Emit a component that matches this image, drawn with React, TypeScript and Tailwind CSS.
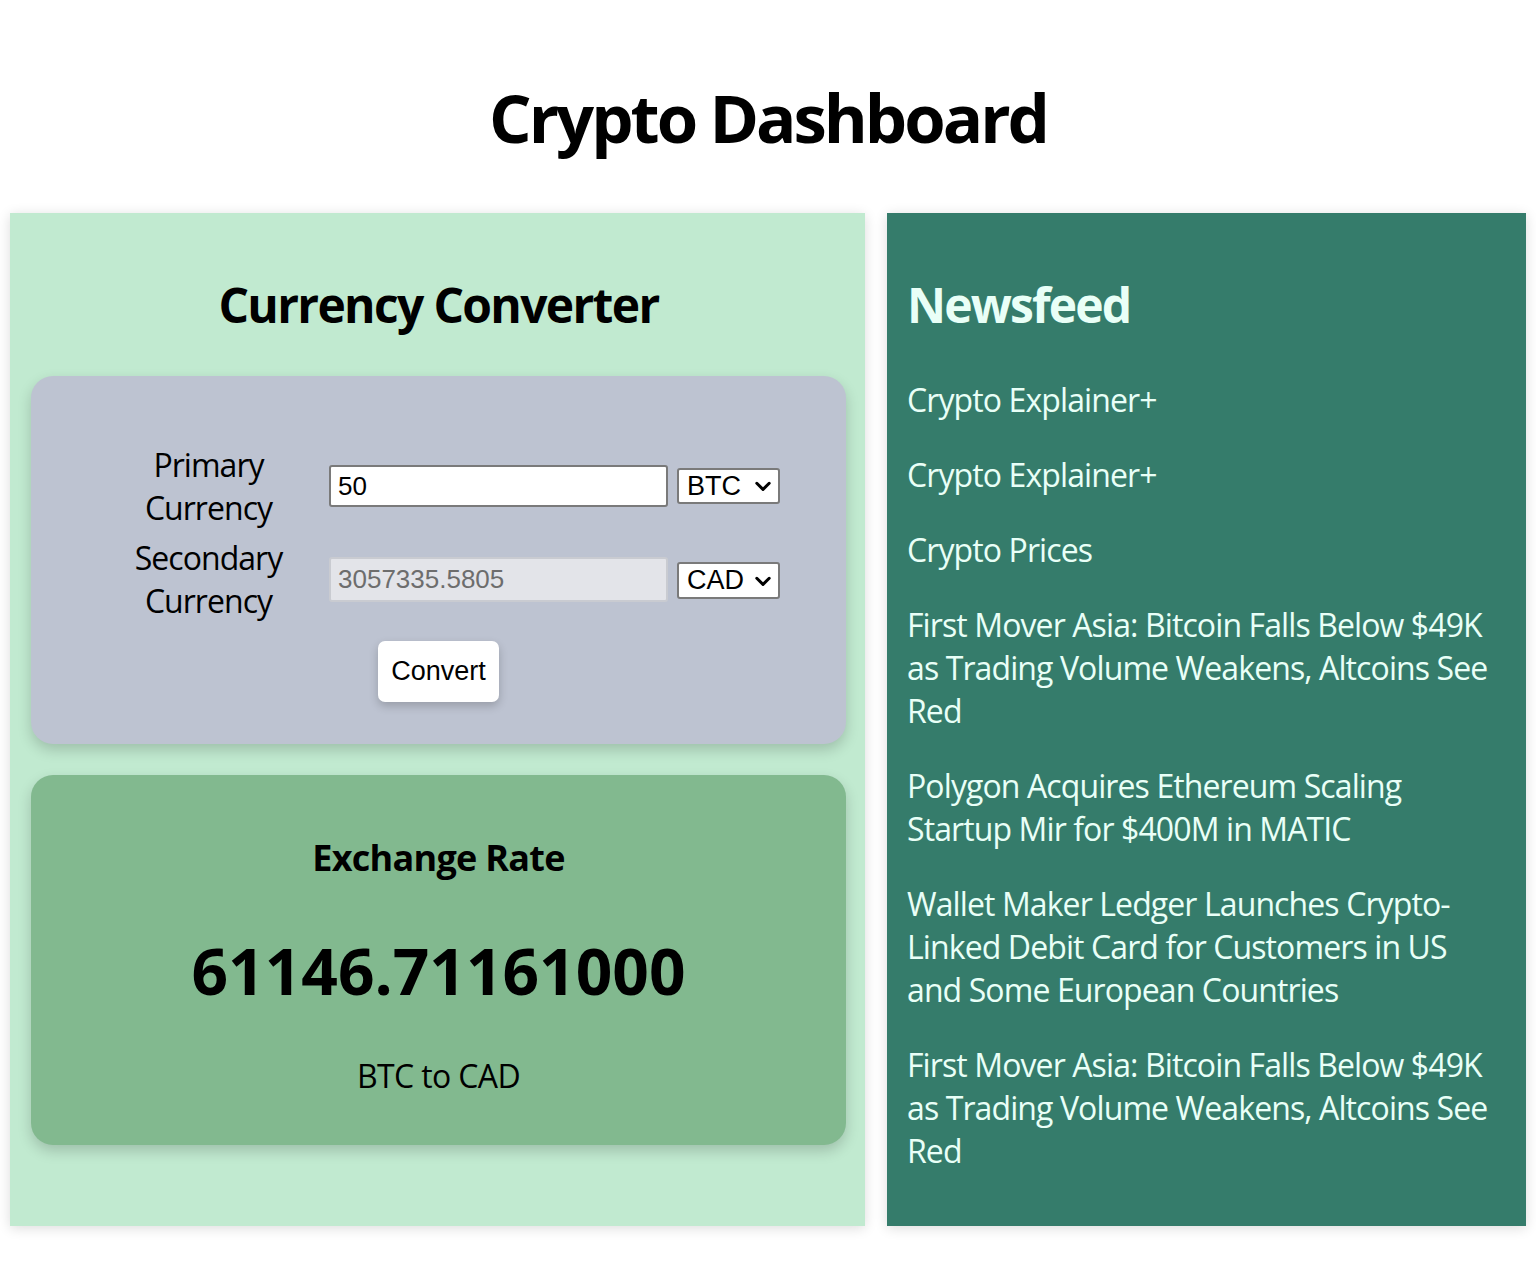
import React from "react";

const Chevron = () => (
  <svg width="22" height="22" viewBox="0 0 16 16" className="pointer-events-none absolute right-[6px] top-1/2 -translate-y-1/2">
    <path d="M3.5 6 L8 10.5 L12.5 6" fill="none" stroke="#000" strokeWidth="2.2" strokeLinecap="round" strokeLinejoin="round" />
  </svg>
);

const Select = ({ value, cls }: { value: string; cls: string }) => (
  <div className={"relative w-[103px] " + cls}>
    <select
      defaultValue={value}
      className="h-full w-full appearance-none rounded-[3px] border-2 border-[#7a7a7a] bg-white pl-[8px] font-['Liberation_Sans',Arial,sans-serif] text-[27px] leading-none text-black outline-none"
    >
      <option>BTC</option>
      <option>ETH</option>
      <option>CAD</option>
      <option>USD</option>
    </select>
    <Chevron />
  </div>
);

const news: string[][] = [
  ["Crypto Explainer+"],
  ["Crypto Explainer+"],
  ["Crypto Prices"],
  ["First Mover Asia: Bitcoin Falls Below $49K", "as Trading Volume Weakens, Altcoins See", "Red"],
  ["Polygon Acquires Ethereum Scaling", "Startup Mir for $400M in MATIC"],
  ["Wallet Maker Ledger Launches Crypto-", "Linked Debit Card for Customers in US", "and Some European Countries"],
  ["First Mover Asia: Bitcoin Falls Below $49K", "as Trading Volume Weakens, Altcoins See", "Red"],
];

export default function App() {
  return (
    <div className="min-h-[1268px] bg-white font-['Open_Sans',sans-serif] text-black">
      <h1 className="pt-[77px] text-center text-[67px] font-bold leading-[80px] tracking-[-0.045em]">
        Crypto Dashboard
      </h1>
      <div className="mt-[56px] grid grid-cols-[855px_1fr] gap-[22px] px-[10px]">
        {/* Left panel */}
        <div className="bg-[#c1ead0] pl-[21px] pr-[19px] pt-[64px] pb-[79px] shadow-[0_2px_12px_rgba(0,0,0,0.14)]">
          <h2 className="text-center text-[48px] font-bold leading-[56px] tracking-[-0.035em]">Currency Converter</h2>
          <div className="mt-[43px] rounded-[22px] bg-[#bdc3d1] pt-[67px] pb-[42px] shadow-[0_6px_14px_rgba(0,0,0,0.18)]">
            <div className="mx-auto grid w-[683px] grid-cols-[223px_339px_103px] gap-x-[9px] gap-y-[7px] items-center">
              <div className="text-center text-[32px] leading-[43px] tracking-[-0.03em]">
                Primary
                <br />
                Currency
              </div>
              <input
                defaultValue="50"
                className="h-[42px] w-[339px] rounded-[3px] border-2 border-[#7a7a7a] bg-white pl-[7px] font-['Liberation_Sans',Arial,sans-serif] text-[26px] text-black outline-none"
              />
              <Select value="BTC" cls="h-[36px]" />
              <div className="text-center text-[32px] leading-[43px] tracking-[-0.03em]">
                Secondary
                <br />
                Currency
              </div>
              <input
                disabled
                defaultValue="3057335.5805"
                className="h-[45px] w-[339px] rounded-[3px] border-2 border-[#c9cbd1] bg-[#e3e4e9] pl-[7px] font-['Liberation_Sans',Arial,sans-serif] text-[26px] text-[#6d6d6d] outline-none"
              />
              <Select value="CAD" cls="h-[37px] mt-[3px]" />
            </div>
            <div className="mt-[19px] flex justify-center">
              <button className="h-[61px] w-[121px] rounded-[7px] bg-white font-['Liberation_Sans',Arial,sans-serif] text-[27px] text-black shadow-[0_4px_10px_rgba(0,0,0,0.2)]">
                Convert
              </button>
            </div>
          </div>
          <div className="mt-[31px] rounded-[22px] bg-[#82b98f] pt-[61px] pb-[48px] text-center shadow-[0_6px_14px_rgba(0,0,0,0.18)]">
            <h3 className="text-[36px] font-bold leading-[44px] tracking-[-0.02em]">Exchange Rate</h3>
            <div className="mt-[53px] text-[64px] font-bold leading-[76px]">61146.71161000</div>
            <div className="mt-[45px] text-[32px] leading-[43px] tracking-[-0.02em]">BTC to CAD</div>
          </div>
        </div>
        {/* Right panel */}
        <div className="bg-[#357c6b] pl-[20px] pr-[20px] pt-[64px] pb-[54px] text-[#e9fff7] shadow-[0_2px_12px_rgba(0,0,0,0.14)]">
          <h2 className="text-[48px] font-bold leading-[56px] tracking-[-0.038em]">Newsfeed</h2>
          <div className="mt-[45px] flex flex-col gap-[32px]">
            {news.map((lines, i) => (
              <p key={i} className="text-[32px] leading-[43px] tracking-[-0.028em]">
                {lines.map((l, j) => (
                  <span key={j} className="block whitespace-nowrap">
                    {l}
                  </span>
                ))}
              </p>
            ))}
          </div>
        </div>
      </div>
    </div>
  );
}
